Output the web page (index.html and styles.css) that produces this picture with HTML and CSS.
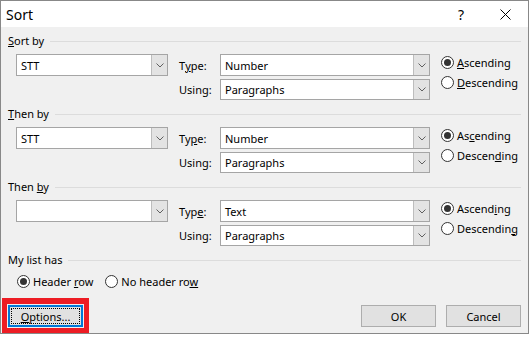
FILE: index.html
```html
<!DOCTYPE html>
<html lang="en">
<head>
    <meta charset="UTF-8">
    <title>Sort</title>
    <link rel="stylesheet" href="styles.css">
</head>
<body>
    <div class="dialog">
        <div class="titlebar">
            <span class="title">Sort</span>
            <span class="help">?</span>
            <span class="close">
                <svg width="11" height="11" viewBox="0 0 11 11"><path d="M0.5 0.5L10.5 10.5M10.5 0.5L0.5 10.5" stroke="#000" stroke-width="1" fill="none"/></svg>
            </span>
        </div>

        <div class="dialog-body">
            <div class="group">
                <div class="group-head"><span><u>S</u>ort by</span></div>
                <div class="sort-grid">
                    <div class="combo key"><span class="combo-text">STT</span><span class="combo-btn"><svg width="8" height="5" viewBox="0 0 8 5"><path d="M0.5 0.5L4 4L7.5 0.5" stroke="#606060" fill="none"/></svg></span></div>
                    <span class="field-label">T<u>y</u>pe:</span>
                    <div class="combo"><span class="combo-text">Number</span><span class="combo-btn"><svg width="8" height="5" viewBox="0 0 8 5"><path d="M0.5 0.5L4 4L7.5 0.5" stroke="#606060" fill="none"/></svg></span></div>
                    <div class="order">
                        <label class="radio-item"><span class="radio checked"></span><span><u>A</u>scending</span></label>
                        <label class="radio-item"><span class="radio"></span><span><u>D</u>escending</span></label>
                    </div>
                    <span class="field-label using">Using:</span>
                    <div class="combo using"><span class="combo-text">Paragraphs</span><span class="combo-btn"><svg width="8" height="5" viewBox="0 0 8 5"><path d="M0.5 0.5L4 4L7.5 0.5" stroke="#606060" fill="none"/></svg></span></div>
                </div>
            </div>

            <div class="group">
                <div class="group-head"><span><u>T</u>hen by</span></div>
                <div class="sort-grid">
                    <div class="combo key"><span class="combo-text">STT</span><span class="combo-btn"><svg width="8" height="5" viewBox="0 0 8 5"><path d="M0.5 0.5L4 4L7.5 0.5" stroke="#606060" fill="none"/></svg></span></div>
                    <span class="field-label">Ty<u>p</u>e:</span>
                    <div class="combo"><span class="combo-text">Number</span><span class="combo-btn"><svg width="8" height="5" viewBox="0 0 8 5"><path d="M0.5 0.5L4 4L7.5 0.5" stroke="#606060" fill="none"/></svg></span></div>
                    <div class="order">
                        <label class="radio-item"><span class="radio checked"></span><span>As<u>c</u>ending</span></label>
                        <label class="radio-item"><span class="radio"></span><span>Descen<u>d</u>ing</span></label>
                    </div>
                    <span class="field-label using">Using:</span>
                    <div class="combo using"><span class="combo-text">Paragraphs</span><span class="combo-btn"><svg width="8" height="5" viewBox="0 0 8 5"><path d="M0.5 0.5L4 4L7.5 0.5" stroke="#606060" fill="none"/></svg></span></div>
                </div>
            </div>

            <div class="group">
                <div class="group-head"><span>Then <u>b</u>y</span></div>
                <div class="sort-grid">
                    <div class="combo key"><span class="combo-text"></span><span class="combo-btn"><svg width="8" height="5" viewBox="0 0 8 5"><path d="M0.5 0.5L4 4L7.5 0.5" stroke="#606060" fill="none"/></svg></span></div>
                    <span class="field-label">Typ<u>e</u>:</span>
                    <div class="combo"><span class="combo-text">Text</span><span class="combo-btn"><svg width="8" height="5" viewBox="0 0 8 5"><path d="M0.5 0.5L4 4L7.5 0.5" stroke="#606060" fill="none"/></svg></span></div>
                    <div class="order">
                        <label class="radio-item"><span class="radio checked"></span><span>Ascend<u>i</u>ng</span></label>
                        <label class="radio-item"><span class="radio"></span><span>Descendin<u>g</u></span></label>
                    </div>
                    <span class="field-label using">Using:</span>
                    <div class="combo using"><span class="combo-text">Paragraphs</span><span class="combo-btn"><svg width="8" height="5" viewBox="0 0 8 5"><path d="M0.5 0.5L4 4L7.5 0.5" stroke="#606060" fill="none"/></svg></span></div>
                </div>
            </div>

            <div class="list-group">
                <div class="group-head"><span>My list has</span></div>
                <div class="list-options">
                    <label class="radio-item"><span class="radio checked"></span><span>Header <u>r</u>ow</span></label>
                    <label class="radio-item"><span class="radio"></span><span>No header ro<u>w</u></span></label>
                </div>
            </div>

            <div class="button-row">
                <div class="highlight">
                    <button class="btn btn-focus"><span class="focus-ring"><u>O</u>ptions...</span></button>
                </div>
                <button class="btn btn-ok">OK</button>
                <button class="btn">Cancel</button>
            </div>
        </div>
    </div>
</body>
</html>
```

FILE: styles.css
```css
body {
    margin: 0;
    background: #fff;
    font-family: 'Noto Sans', sans-serif;
    font-size: 11px;
    color: #000;
}

.dialog {
    width: 529px;
    height: 334px;
    box-sizing: border-box;
    border: 1px solid #888;
    background: #f0f0f0;
}

.titlebar {
    height: 26px;
    background: #fff;
    display: flex;
    align-items: center;
    padding-left: 5px;
}

.title {
    font-size: 14px;
}

.help {
    margin-left: auto;
    font-size: 14px;
    margin-right: 36px;
}

.close {
    display: flex;
    margin-right: 17px;
}

.dialog-body {
    padding: 7px 7px 0 7px;
}

.group {
    margin-bottom: 7px;
}

.group-head {
    display: flex;
    align-items: center;
    height: 14px;
    line-height: 14px;
}

.group-head::after {
    content: "";
    flex: 1;
    height: 1px;
    background: #dcdcdc;
    margin-left: 6px;
}

u {
    text-decoration: underline;
    text-underline-offset: 1px;
}

.sort-grid {
    display: grid;
    grid-template-columns: 152px 52px 210px auto;
    grid-template-rows: 22px 21px;
    row-gap: 3px;
    margin-top: 6px;
    padding-left: 8px;
}

.combo {
    grid-column: 3;
    grid-row: 1;
    display: flex;
    background: #fff;
    border: 1px solid #a5a5a5;
    box-sizing: border-box;
}

.combo.key {
    grid-column: 1;
}

.combo.using {
    grid-row: 2;
}

.combo-text {
    flex: 1;
    padding-left: 4px;
    display: flex;
    align-items: center;
}

.combo-btn {
    width: 15px;
    background: #e3e3e3;
    border-left: 1px solid #bdbdbd;
    display: flex;
    align-items: center;
    justify-content: center;
}

.field-label {
    grid-column: 2;
    grid-row: 1;
    margin-left: 11px;
    display: flex;
    align-items: center;
}

.field-label.using {
    grid-row: 2;
}

.order {
    grid-column: 4;
    grid-row: 1 / 3;
    margin-left: 11px;
    display: flex;
    flex-direction: column;
    gap: 4px;
}

.radio-item {
    display: flex;
    align-items: center;
    gap: 3px;
    height: 16px;
}

.radio {
    width: 13px;
    height: 13px;
    box-sizing: border-box;
    border: 1px solid #333;
    border-radius: 50%;
    background: #fff;
    display: flex;
    align-items: center;
    justify-content: center;
}

.radio.checked::after {
    content: "";
    width: 7px;
    height: 7px;
    border-radius: 50%;
    background: #333;
}

.list-options {
    display: flex;
    gap: 12px;
    margin-top: 7px;
    padding-left: 9px;
}

.list-options .radio-item {
    height: 14px;
}

.button-row {
    display: flex;
    align-items: center;
    gap: 10px;
    margin-top: 17px;
    height: 22px;
}

.btn {
    width: 75px;
    height: 22px;
    box-sizing: border-box;
    background: #e1e1e1;
    border: 1px solid #adadad;
    font-family: inherit;
    font-size: 11px;
    color: #000;
    padding: 0;
}

.btn-ok {
    margin-left: auto;
}

.highlight {
    border: 5px solid #ed1c24;
    border-top-width: 6px;
    padding: 1px;
    margin: -7px 0 -6px -6px;
    display: flex;
}

.btn-focus {
    border: 2px solid #0078d7;
    padding: 1px;
    display: flex;
}

.focus-ring {
    flex: 1;
    border: 1px dotted #000;
    display: flex;
    align-items: center;
    justify-content: center;
}
```
